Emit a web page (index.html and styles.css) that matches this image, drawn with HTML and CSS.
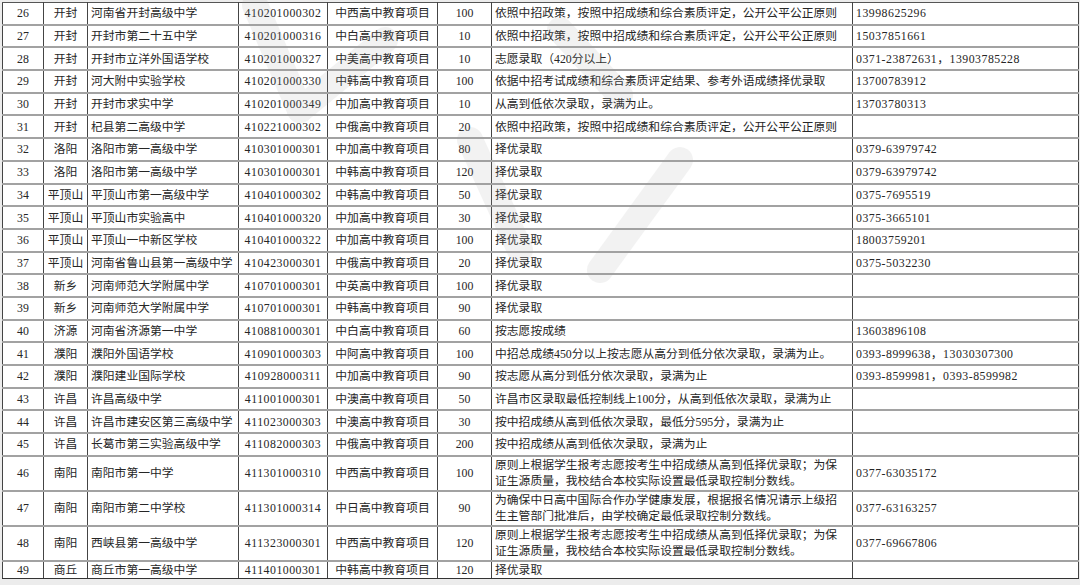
FILE: index.html
```html
<!DOCTYPE html>
<html lang="zh-CN">
<head>
<meta charset="utf-8">
<title>中外合作高中教育项目</title>
<link rel="stylesheet" href="styles.css">
</head>
<body>
<div class="sheet">
<table class="tbl">
<colgroup>
<col class="c1"><col class="c2"><col class="c3"><col class="c4"><col class="c5"><col class="c6"><col class="c7"><col class="c8">
</colgroup>
<tbody>
<tr><td class="ctr">26</td><td class="ctr">开封</td><td>河南省开封高级中学</td><td class="ctr num">410201000302</td><td class="ctr">中西高中教育项目</td><td class="ctr">100</td><td>依照中招政策，按照中招成绩和综合素质评定，公开公平公正原则</td><td class="num">13998625296</td></tr>
<tr><td class="ctr">27</td><td class="ctr">开封</td><td>开封市第二十五中学</td><td class="ctr num">410201000316</td><td class="ctr">中白高中教育项目</td><td class="ctr">10</td><td>依照中招政策，按照中招成绩和综合素质评定，公开公平公正原则</td><td class="num">15037851661</td></tr>
<tr><td class="ctr">28</td><td class="ctr">开封</td><td>开封市立洋外国语学校</td><td class="ctr num">410201000327</td><td class="ctr">中美高中教育项目</td><td class="ctr">10</td><td>志愿录取（420分以上）</td><td class="num">0371-23872631，13903785228</td></tr>
<tr><td class="ctr">29</td><td class="ctr">开封</td><td>河大附中实验学校</td><td class="ctr num">410201000330</td><td class="ctr">中韩高中教育项目</td><td class="ctr">100</td><td>依据中招考试成绩和综合素质评定结果、参考外语成绩择优录取</td><td class="num">13700783912</td></tr>
<tr><td class="ctr">30</td><td class="ctr">开封</td><td>开封市求实中学</td><td class="ctr num">410201000349</td><td class="ctr">中加高中教育项目</td><td class="ctr">10</td><td>从高到低依次录取，录满为止。</td><td class="num">13703780313</td></tr>
<tr><td class="ctr">31</td><td class="ctr">开封</td><td>杞县第二高级中学</td><td class="ctr num">410221000302</td><td class="ctr">中俄高中教育项目</td><td class="ctr">20</td><td>依照中招政策，按照中招成绩和综合素质评定，公开公平公正原则</td><td class="num"></td></tr>
<tr><td class="ctr">32</td><td class="ctr">洛阳</td><td>洛阳市第一高级中学</td><td class="ctr num">410301000301</td><td class="ctr">中加高中教育项目</td><td class="ctr">80</td><td>择优录取</td><td class="num">0379-63979742</td></tr>
<tr><td class="ctr">33</td><td class="ctr">洛阳</td><td>洛阳市第一高级中学</td><td class="ctr num">410301000301</td><td class="ctr">中韩高中教育项目</td><td class="ctr">120</td><td>择优录取</td><td class="num">0379-63979742</td></tr>
<tr><td class="ctr">34</td><td class="ctr">平顶山</td><td>平顶山市第一高级中学</td><td class="ctr num">410401000302</td><td class="ctr">中韩高中教育项目</td><td class="ctr">50</td><td>择优录取</td><td class="num">0375-7695519</td></tr>
<tr><td class="ctr">35</td><td class="ctr">平顶山</td><td>平顶山市实验高中</td><td class="ctr num">410401000320</td><td class="ctr">中加高中教育项目</td><td class="ctr">30</td><td>择优录取</td><td class="num">0375-3665101</td></tr>
<tr><td class="ctr">36</td><td class="ctr">平顶山</td><td>平顶山一中新区学校</td><td class="ctr num">410401000322</td><td class="ctr">中加高中教育项目</td><td class="ctr">100</td><td>择优录取</td><td class="num">18003759201</td></tr>
<tr><td class="ctr">37</td><td class="ctr">平顶山</td><td>河南省鲁山县第一高级中学</td><td class="ctr num">410423000301</td><td class="ctr">中俄高中教育项目</td><td class="ctr">20</td><td>择优录取</td><td class="num">0375-5032230</td></tr>
<tr><td class="ctr">38</td><td class="ctr">新乡</td><td>河南师范大学附属中学</td><td class="ctr num">410701000301</td><td class="ctr">中英高中教育项目</td><td class="ctr">100</td><td>择优录取</td><td class="num"></td></tr>
<tr><td class="ctr">39</td><td class="ctr">新乡</td><td>河南师范大学附属中学</td><td class="ctr num">410701000301</td><td class="ctr">中韩高中教育项目</td><td class="ctr">90</td><td>择优录取</td><td class="num"></td></tr>
<tr><td class="ctr">40</td><td class="ctr">济源</td><td>河南省济源第一中学</td><td class="ctr num">410881000301</td><td class="ctr">中白高中教育项目</td><td class="ctr">60</td><td>按志愿按成绩</td><td class="num">13603896108</td></tr>
<tr><td class="ctr">41</td><td class="ctr">濮阳</td><td>濮阳外国语学校</td><td class="ctr num">410901000303</td><td class="ctr">中阿高中教育项目</td><td class="ctr">100</td><td>中招总成绩450分以上按志愿从高分到低分依次录取，录满为止。</td><td class="num">0393-8999638，13030307300</td></tr>
<tr><td class="ctr">42</td><td class="ctr">濮阳</td><td>濮阳建业国际学校</td><td class="ctr num">410928000311</td><td class="ctr">中加高中教育项目</td><td class="ctr">90</td><td>按志愿从高分到低分依次录取，录满为止</td><td class="num">0393-8599981，0393-8599982</td></tr>
<tr><td class="ctr">43</td><td class="ctr">许昌</td><td>许昌高级中学</td><td class="ctr num">411001000301</td><td class="ctr">中澳高中教育项目</td><td class="ctr">50</td><td>许昌市区录取最低控制线上100分，从高到低依次录取，录满为止</td><td class="num"></td></tr>
<tr><td class="ctr">44</td><td class="ctr">许昌</td><td>许昌市建安区第三高级中学</td><td class="ctr num">411023000303</td><td class="ctr">中澳高中教育项目</td><td class="ctr">30</td><td>按中招成绩从高到低依次录取，最低分595分，录满为止</td><td class="num"></td></tr>
<tr><td class="ctr">45</td><td class="ctr">许昌</td><td>长葛市第三实验高级中学</td><td class="ctr num">411082000303</td><td class="ctr">中俄高中教育项目</td><td class="ctr">200</td><td>按中招成绩从高到低依次录取，录满为止</td><td class="num"></td></tr>
<tr class="tall"><td class="ctr">46</td><td class="ctr">南阳</td><td>南阳市第一中学</td><td class="ctr num">411301000310</td><td class="ctr">中西高中教育项目</td><td class="ctr">100</td><td class="wrap">原则上根据学生报考志愿按考生中招成绩从高到低择优录取；为保证生源质量，我校结合本校实际设置最低录取控制分数线。</td><td class="num">0377-63035172</td></tr>
<tr class="tall"><td class="ctr">47</td><td class="ctr">南阳</td><td>南阳市第二中学校</td><td class="ctr num">411301000314</td><td class="ctr">中日高中教育项目</td><td class="ctr">90</td><td class="wrap">为确保中日高中国际合作办学健康发展，根据报名情况请示上级招生主管部门批准后，由学校确定最低录取控制分数线。</td><td class="num">0377-63163257</td></tr>
<tr class="tall"><td class="ctr">48</td><td class="ctr">南阳</td><td>西峡县第一高级中学</td><td class="ctr num">411323000301</td><td class="ctr">中西高中教育项目</td><td class="ctr">120</td><td class="wrap">原则上根据学生报考志愿按考生中招成绩从高到低择优录取；为保证生源质量，我校结合本校实际设置最低录取控制分数线。</td><td class="num">0377-69667806</td></tr>
<tr class="last"><td class="ctr">49</td><td class="ctr">商丘</td><td>商丘市第一高级中学</td><td class="ctr num">411401000301</td><td class="ctr">中韩高中教育项目</td><td class="ctr">120</td><td>择优录取</td><td class="num"></td></tr>
</tbody>
</table>
<svg class="watermark" width="1080" height="585" viewBox="0 0 1080 585" aria-hidden="true">
<g fill="none" stroke="#9a9a9a" stroke-linecap="round" stroke-width="26">
<path d="M255 5 L300 110"/>
<path d="M300 110 L385 40"/>
<path d="M560 30 L620 95"/>
<path d="M470 140 L520 250"/>
<path d="M680 160 L600 270"/>
</g>
</svg>
</div>
</body>
</html>
```
FILE: styles.css
```css
html, body {
  margin: 0;
  padding: 0;
  background: #ececec;
}

body {
  width: 1080px;
  height: 585px;
  overflow: hidden;
  font-family: "Liberation Serif", "Noto Sans CJK SC", serif;
  font-size: 11.8px;
  color: #262626;
}

.sheet {
  position: relative;
  width: 1080px;
  height: 585px;
  padding: 2px 0 0 2px;
  box-sizing: border-box;
}

.tbl {
  border-collapse: collapse;
  table-layout: fixed;
  width: 1076px;
  background: #fff;
  border: 1px solid #333;
}

.c1 { width: 41px; }
.c2 { width: 44px; }
.c3 { width: 151px; }
.c4 { width: 89px; }
.c5 { width: 110px; }
.c6 { width: 54px; }
.c7 { width: 361px; }
.c8 { width: 226px; }

.tbl td {
  border-left: 1px solid #444;
  border-right: 1px solid #444;
  border-top: 2px solid #a2a2a2;
  border-bottom: 2px solid #a2a2a2;
  padding: 0 3px;
  height: 20.7px;
  line-height: 14px;
  white-space: nowrap;
  overflow: hidden;
  vertical-align: middle;
}

.tbl tr:first-child td {
  border-top: 1px solid #555;
}

.tbl .ctr {
  text-align: center;
  padding: 0;
}

.tbl .num {
  letter-spacing: 0.5px;
}

.tbl tr.tall td {
  height: 33px;
}

.tbl td.wrap {
  white-space: normal;
  line-height: 16px;
  padding-right: 12px;
}

.tbl tr.last td {
  height: 16.5px;
  border-bottom: 1px solid #333;
}

.watermark {
  position: absolute;
  left: 0;
  top: 0;
  opacity: 0.12;
  pointer-events: none;
}
```
